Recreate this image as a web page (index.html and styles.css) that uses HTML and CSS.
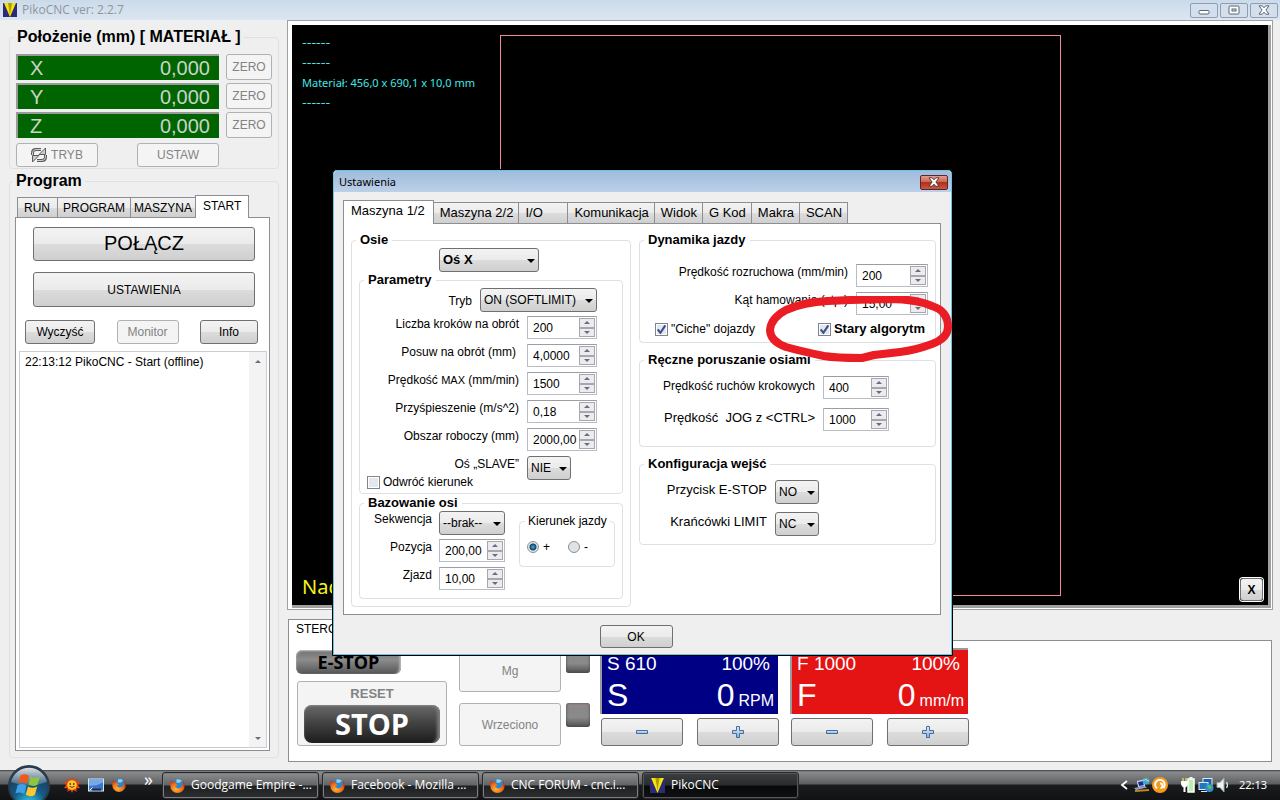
FILE: index.html
```html
<!DOCTYPE html>
<html lang="pl">
<head>
<meta charset="utf-8">
<title>PikoCNC ver: 2.2.7</title>
<link rel="stylesheet" href="styles.css">
</head>
<body>
<svg width="0" height="0" class="defs" aria-hidden="true">
  <defs>
    <linearGradient id="gPlus" x1="0" y1="0" x2="0" y2="1"><stop offset="0" stop-color="#e4f0fb"/><stop offset="1" stop-color="#7fb0dc"/></linearGradient>
    <radialGradient id="gFox" cx=".4" cy=".7" r=".7"><stop offset="0" stop-color="#ffb52e"/><stop offset=".6" stop-color="#ee6a1c"/><stop offset="1" stop-color="#b8320f"/></radialGradient>
    <radialGradient id="gOrb" cx=".5" cy=".95" r=".9"><stop offset="0" stop-color="#35d0ee"/><stop offset=".45" stop-color="#155a86"/><stop offset="1" stop-color="#1a3550"/></radialGradient>
    <linearGradient id="gShine" x1="0" y1="0" x2="0" y2="1"><stop offset="0" stop-color="#fff" stop-opacity=".85"/><stop offset="1" stop-color="#fff" stop-opacity=".15"/></linearGradient>
  </defs>
  <symbol id="logo" viewBox="0 0 14 14"><rect width="14" height="14" fill="#2c2a78"/><path d="M1 0h12L7 14z" fill="#f4e60c"/><path d="M5 0h4L7 12z" fill="#b39b08"/></symbol>
  <symbol id="plus" viewBox="0 0 12 12"><path d="M4.500.5h3v4h4v3h-4v4h-3v-4h-4v-3h4z" fill="url(#gPlus)" stroke="#456c9c"/></symbol>
  <symbol id="minus" viewBox="0 0 12 12"><path d="M.5 4.500h11v3H.5z" fill="url(#gPlus)" stroke="#456c9c"/></symbol>
  <symbol id="fox" viewBox="0 0 14 14"><circle cx="7.500" cy="6.500" r="5.500" fill="#2b86cf"/><path d="M6 1.500q3-1.200 5 1l-2 2-3 0z" fill="#8fd0f2"/><path d="M1.500 2Q0 4 .3 7.500A6.700 6.500 0 0 0 13.700 7.500Q14 4.500 12 2.500Q12.500 5 11.500 7Q10 10 7 9.500Q5 9 4.800 7.500L7 7Q7 5.800 5.500 5.500L5.600 4Q4 3 3 3.700Q2 3 1.500 2z" fill="url(#gFox)"/></symbol>
  <symbol id="tick" viewBox="0 0 10 10"><path d="M1.500 4.800L4 8l4.500-6.800" fill="none" stroke="#3b4f8e" stroke-width="1.900"/></symbol>
</svg>

<header class="titlebar">
  <svg class="logo"><use href="#logo"/></svg>
  <h1>PikoCNC ver: 2.2.7</h1>
  <div class="winbtns">
    <button type="button" aria-label="Minimalizuj"><svg viewBox="0 0 12 10"><rect x="1" y="5.500" width="10" height="3.500" rx="1" fill="#fff" stroke="#5c6675"/></svg></button>
    <button type="button" aria-label="Maksymalizuj"><svg viewBox="0 0 12 10"><rect x="1" y="1" width="10" height="8" rx="1" fill="#fff" stroke="#5c6675"/><rect x="4" y="4" width="4" height="2" fill="#d5e1ee" stroke="#5c6675"/></svg></button>
    <button type="button" aria-label="Zamknij"><svg viewBox="0 0 12 10"><path d="M1 .8h3.200L6 2.800 7.800.8H11L7.900 5 11 9.200H7.800L6 7.200 4.200 9.200H1L4.100 5z" fill="#fff" stroke="#5c6675"/></svg></button>
  </div>
</header>

<main class="workspace">
  <aside class="sidebar">
    <fieldset class="group position">
      <legend>Położenie (mm) [ MATERIAŁ ]</legend>
      <div class="axis"><div class="readout"><span>X</span><output>0,000</output></div><button type="button" class="btn" disabled>ZERO</button></div>
      <div class="axis"><div class="readout"><span>Y</span><output>0,000</output></div><button type="button" class="btn" disabled>ZERO</button></div>
      <div class="axis"><div class="readout"><span>Z</span><output>0,000</output></div><button type="button" class="btn" disabled>ZERO</button></div>
      <div class="modes">
        <button type="button" class="btn" disabled><svg viewBox="0 0 16 16" class="cycle"><path d="M1.500 8V6q0-3.500 3.500-3.500h5M14.500 8v2q0 3.500-3.500 3.500H6" fill="none" stroke="#5c5c5c" stroke-width="3"/><path d="M1.500 8V6q0-3.500 3.500-3.500h5M14.500 8v2q0 3.500-3.500 3.500H6" fill="none" stroke="#ccc"/><path d="M14.500 1v6.500H8zM1.500 15V8.500H8z" fill="#ccc" stroke="#5c5c5c"/></svg>TRYB</button>
        <button type="button" class="btn" disabled>USTAW</button>
      </div>
    </fieldset>

    <fieldset class="group program">
      <legend>Program</legend>
      <div class="tabs" role="tablist">
        <button type="button" role="tab" class="run">RUN</button><button type="button" role="tab">PROGRAM</button><button type="button" role="tab" class="tight">MASZYNA</button><button type="button" role="tab" aria-selected="true">START</button>
      </div>
      <div class="startpage">
        <button type="button" class="btn connect">POŁĄCZ</button>
        <button type="button" class="btn settings">USTAWIENIA</button>
        <div class="trio">
          <button type="button" class="btn">Wyczyść</button>
          <button type="button" class="btn" disabled>Monitor</button>
          <button type="button" class="btn">Info</button>
        </div>
        <div class="log">
          <textarea readonly aria-label="Dziennik">22:13:12 PikoCNC - Start (offline)</textarea>
          <div class="scroll"><button type="button" class="up" aria-label="W górę"></button><button type="button" class="down" aria-label="W dół"></button></div>
        </div>
      </div>
    </fieldset>
  </aside>

  <section class="stage">
    <div class="viewport">
      <div class="canvas">
        <p class="dash">------</p><p class="dash">------</p><p>Materiał: 456,0 x 690,1 x 10,0 mm</p><p class="dash">------</p>
        <div class="sheet"></div>
        <p class="hint">Nac</p>
        <button type="button" class="btn hide">X</button>
      </div>
    </div>

    <div class="controls">
      <div class="ctab">STEROWANIE</div>
      <div class="deck">
        <div class="stops">
          <button type="button" class="estop">E-STOP</button>
          <button type="button" class="reset" disabled>RESET<span class="stop">STOP</span></button>
        </div>
        <div class="tools">
          <button type="button" class="btn" disabled>Mg</button><i class="lamp"></i>
          <button type="button" class="btn" disabled>Wrzeciono</button><i class="lamp"></i>
        </div>
        <div class="feed">
          <div class="meter blue"><div><span>S 610</span><span>100%</span></div><div class="big"><span>S</span><span class="value">0<small>RPM</small></span></div></div>
          <div class="pair"><button type="button" class="btn" aria-label="S mniej"><svg><use href="#minus"/></svg></button><button type="button" class="btn" aria-label="S więcej"><svg><use href="#plus"/></svg></button></div>
        </div>
        <div class="feed">
          <div class="meter red"><div><span>F 1000</span><span>100%</span></div><div class="big"><span>F</span><span class="value">0<small>mm/m</small></span></div></div>
          <div class="pair"><button type="button" class="btn" aria-label="F mniej"><svg><use href="#minus"/></svg></button><button type="button" class="btn" aria-label="F więcej"><svg><use href="#plus"/></svg></button></div>
        </div>
      </div>
    </div>
  </section>
</main>

<section class="dialog" role="dialog" aria-labelledby="dlgTitle">
  <header><h2 id="dlgTitle">Ustawienia</h2><button type="button" class="close" aria-label="Zamknij"><svg viewBox="0 0 12 10"><path d="M1 .8h3.200L6 2.800 7.800.8H11L7.900 5 11 9.200H7.800L6 7.200 4.200 9.200H1L4.100 5z" fill="#fff" stroke="#5b3a3a"/></svg></button></header>
  <div class="body">
    <div class="tabs" role="tablist">
      <button type="button" role="tab" aria-selected="true">Maszyna 1/2</button><button type="button" role="tab">Maszyna 2/2</button><button type="button" role="tab" class="io">I/O</button><button type="button" role="tab">Komunikacja</button><button type="button" role="tab">Widok</button><button type="button" role="tab">G Kod</button><button type="button" role="tab">Makra</button><button type="button" role="tab">SCAN</button>
    </div>
    <div class="page">
      <fieldset class="box axes">
        <legend>Osie</legend>
        <div class="drop axis-pick"><select aria-label="Oś"><option>Oś X</option></select></div>
        <fieldset class="box params">
          <legend>Parametry</legend>
          <div class="row"><label for="tryb" class="low">Tryb</label><div class="drop wide"><select id="tryb"><option>ON (SOFTLIMIT)</option></select></div></div>
          <div class="row"><label for="kroki">Liczba kroków na obrót</label><div class="spin"><input id="kroki" value="200"><button type="button" class="up" aria-label="Więcej"></button><button type="button" class="down" aria-label="Mniej"></button></div></div>
          <div class="row"><label for="posuw" class="inset">Posuw na obrót (mm)</label><div class="spin"><input id="posuw" value="4,0000"><button type="button" class="up" aria-label="Więcej"></button><button type="button" class="down" aria-label="Mniej"></button></div></div>
          <div class="row"><label for="vmax">Prędkość <small>MAX</small> (mm/min)</label><div class="spin"><input id="vmax" value="1500"><button type="button" class="up" aria-label="Więcej"></button><button type="button" class="down" aria-label="Mniej"></button></div></div>
          <div class="row"><label for="acc">Przyśpieszenie (m/s^2)</label><div class="spin"><input id="acc" value="0,18"><button type="button" class="up" aria-label="Więcej"></button><button type="button" class="down" aria-label="Mniej"></button></div></div>
          <div class="row"><label for="obszar">Obszar roboczy (mm)</label><div class="spin"><input id="obszar" value="2000,00"><button type="button" class="up" aria-label="Więcej"></button><button type="button" class="down" aria-label="Mniej"></button></div></div>
          <div class="row"><label for="slave">Oś „SLAVE”</label><div class="slot"><div class="drop"><select id="slave"><option>NIE</option></select></div></div></div>
          <label class="check flip"><input type="checkbox"><svg><use href="#tick"/></svg>Odwróć kierunek</label>
        </fieldset>
        <fieldset class="box homing">
          <legend>Bazowanie osi</legend>
          <div class="seq">
            <div class="row"><label for="sekw">Sekwencja</label><div class="drop"><select id="sekw"><option>--brak--</option></select></div></div>
            <div class="row"><label for="poz">Pozycja</label><div class="spin"><input id="poz" value="200,00"><button type="button" class="up" aria-label="Więcej"></button><button type="button" class="down" aria-label="Mniej"></button></div></div>
            <div class="row"><label for="zjazd">Zjazd</label><div class="spin"><input id="zjazd" value="10,00"><button type="button" class="up" aria-label="Więcej"></button><button type="button" class="down" aria-label="Mniej"></button></div></div>
          </div>
          <fieldset class="box dir">
            <legend>Kierunek jazdy</legend>
            <label><input type="radio" name="dir" checked>+</label>
            <label><input type="radio" name="dir">-</label>
          </fieldset>
        </fieldset>
      </fieldset>

      <div class="right">
        <fieldset class="box dynamics">
          <legend>Dynamika jazdy</legend>
          <div class="row"><label for="roz">Prędkość rozruchowa (mm/min)</label><div class="spin"><input id="roz" value="200"><button type="button" class="up" aria-label="Więcej"></button><button type="button" class="down" aria-label="Mniej"></button></div></div>
          <div class="row"><label for="kat">Kąt hamowania (stp.)</label><div class="spin"><input id="kat" value="15,00"><button type="button" class="up" aria-label="Więcej"></button><button type="button" class="down" aria-label="Mniej"></button></div></div>
          <div class="checks">
            <label class="check"><input type="checkbox" checked><svg><use href="#tick"/></svg>"Ciche" dojazdy</label>
            <label class="check strong"><input type="checkbox" checked><svg><use href="#tick"/></svg>Stary algorytm</label>
          </div>
        </fieldset>
        <fieldset class="box manual">
          <legend>Ręczne poruszanie osiami</legend>
          <div class="row"><label for="krok">Prędkość ruchów krokowych</label><div class="spin"><input id="krok" value="400"><button type="button" class="up" aria-label="Więcej"></button><button type="button" class="down" aria-label="Mniej"></button></div></div>
          <div class="row larger"><label for="jog">Prędkość&nbsp; JOG z &lt;CTRL&gt;</label><div class="spin"><input id="jog" value="1000"><button type="button" class="up" aria-label="Więcej"></button><button type="button" class="down" aria-label="Mniej"></button></div></div>
        </fieldset>
        <fieldset class="box inputs">
          <legend>Konfiguracja wejść</legend>
          <div class="row larger"><label for="es">Przycisk E-STOP</label><div class="drop"><select id="es"><option>NO</option></select></div></div>
          <div class="row larger"><label for="lim">Krańcówki LIMIT</label><div class="drop"><select id="lim"><option>NC</option></select></div></div>
        </fieldset>
      </div>
    </div>
    <button type="button" class="btn ok">OK</button>
  </div>
  <svg class="marker" viewBox="0 0 190 72" aria-hidden="true"><path d="M4 34Q5 22 20 14Q38 6 62 5L84 4L124 3Q150 3 166 10Q182 15 182 31Q182 42 166 48Q150 54 134 56L108 59L96 62Q70 62 58 60Q34 55 20 51Q4 45 4 34z" fill="none" stroke="#ea1c24" stroke-width="8" stroke-linejoin="round"/></svg>
</section>

<footer class="taskbar">
  <button type="button" class="orb" aria-label="Start"><svg viewBox="0 0 42 42"><circle cx="21" cy="21" r="20" fill="url(#gOrb)" stroke="#2b3c4a" stroke-width="2"/><path d="M3 17A18.500 18.500 0 0 1 39 17Q21 24 3 17z" fill="url(#gShine)"/><path d="M12.500 10.500q4-2.500 8.500.3L19 19q-4-3-9-.7z" fill="#ee5a1d"/><path d="M22.500 11.500q4.500 2.500 9.500 0l-2.500 8.200q-4.500 2.500-9-.2z" fill="#8cc63e"/><path d="M9.600 20q4.800-2.300 8.900.5L16.300 29q-4-2.800-8.800-.6z" fill="#3ea0e6"/><path d="M20 21.500q4.500 2.400 9.200 0L26.800 30q-4.600 2.500-9-.3z" fill="#fdc82f"/></svg></button>
  <nav class="quick">
    <a href="#" aria-label="Pogoda"><svg viewBox="0 0 16 16"><path d="M8 0l1.500 3L12.500 1l0 3.500L16 5l-2 3 2 3-3.500.5V15l-3-2L8 16l-1.500-3-3 2v-3.500L0 11l2-3-2-3 3.500-.5V1l3 2z" fill="#e0401c"/><circle cx="8" cy="8" r="4.800" fill="#ffc928"/><circle cx="6.300" cy="7" r=".8"/><circle cx="9.700" cy="7" r=".8"/><path d="M5.500 9.300q2.500 2.200 5 0" fill="none" stroke="#722"/></svg></a>
    <a href="#" aria-label="Pulpit"><svg viewBox="0 0 16 13"><rect x=".5" y=".5" width="15" height="12" fill="#3b74cc" stroke="#dce6ef"/><path d="M1 1h14v3Q8 8 1 7z" fill="#78a8e6"/><path d="M4 11h9" stroke="#1c2f4d" stroke-width="2"/><path d="M1.500 12l3-3" stroke="#fff"/></svg></a>
    <a href="#" aria-label="Firefox"><svg viewBox="0 0 14 14"><use href="#fox"/></svg></a>
  </nav>
  <span class="more">»</span>
  <nav class="tasks">
    <a href="#"><svg viewBox="0 0 14 14"><use href="#fox"/></svg>Goodgame Empire -...</a>
    <a href="#"><svg viewBox="0 0 14 14"><use href="#fox"/></svg>Facebook - Mozilla ...</a>
    <a href="#"><svg viewBox="0 0 14 14"><use href="#fox"/></svg>CNC FORUM - cnc.i...</a>
    <a href="#" class="active"><svg viewBox="0 0 14 14"><use href="#logo"/></svg>PikoCNC</a>
  </nav>
  <div class="tray">
    <svg viewBox="0 0 8 10" class="t8"><path d="M7 1L2 5l5 4" fill="none" stroke="#fff" stroke-width="1.800"/></svg>
    <svg viewBox="0 0 16 16" class="t16"><path d="M1 13l14-1v2L1 15z" fill="#c8841c"/><path d="M3 4l7-1.500L11 9l-7 1z" fill="#dfe6f4"/><path d="M4 5l5-1 .8 4.200L5 9z" fill="#1a2a9c"/><path d="M0 11l11-2 2 1.500L2 13z" fill="#8ea4d0"/><circle cx="12" cy="4" r="3.500" fill="#4aa3c8"/><path d="M9 3q2 1 3-1 1 3 3 2" stroke="#bfe7a8" fill="none"/></svg>
    <svg viewBox="0 0 16 16" class="t16"><circle cx="8" cy="8" r="8" fill="#f59a1b"/><path d="M5 11.500A4.800 4.800 0 1 1 11.300 11" fill="none" stroke="#fff" stroke-width="1.900"/><path d="M8 6.500q2.500 0 2.500 2.200T8.500 11" fill="none" stroke="#fff" stroke-width="1.900"/></svg>
    <svg viewBox="0 0 16 16" class="t16 gapl"><rect x="8" y="2" width="6" height="13" fill="#b9f0ae" stroke="#fff" stroke-width="1.500"/><path d="M9.500 0.500h3" stroke="#fff" stroke-width="2"/><path d="M3 1v3M6 1v3" stroke="#e8d24a" stroke-width="1.500"/><path d="M1 4h7v3q-.5 3-2.500 3.500V15h-2v-4.500Q1.500 10 1 7z" fill="#fff"/></svg>
    <svg viewBox="0 0 16 16" class="t16"><rect x="5" y="1.500" width="9" height="7" fill="#1d5fa8" stroke="#dcecf8"/><rect x="1" y="5.500" width="9" height="7" fill="#1f78c4" stroke="#dcecf8"/><path d="M3 14.500h6" stroke="#dcecf8"/><circle cx="11.500" cy="11" r="4" fill="#2e8fd6"/><path d="M9 9q2-2 4 0t-1 3q-2 0-3-3z" fill="#5fc04a"/></svg>
    <svg viewBox="0 0 16 16" class="t16"><path d="M1 5.500h3L8 1v14l-4-4.500H1z" fill="#eef2f4" stroke="#9aa"/><path d="M10.500 5q2 3 0 6" fill="none" stroke="#e6e6e6" stroke-width="1.300"/></svg>
    <time>22:13</time>
  </div>
</footer>
</body>
</html>
```
FILE: styles.css
```css
* { box-sizing: border-box; }
body {
  margin: 0;
  height: 100vh;
  display: grid;
  grid-template-rows: 20px minmax(0, 1fr) 30px;
  overflow: hidden;
  position: relative;
  background: #efefef;
  color: #000;
  font: 12px/16px "Liberation Sans", Arial, sans-serif;
}
button, input, select, textarea { font: inherit; color: inherit; margin: 0; padding: 0; }
h1, h2, p { margin: 0; font-weight: normal; }
fieldset { margin: 0; min-width: 0; border: 1px solid #dde1e4; border-radius: 4px; }
.defs { position: absolute; }

/* window frame */
.titlebar {
  display: flex;
  align-items: center;
  padding: 0 3px;
  background: linear-gradient(#cbdaea, #dbe6f1);
}
.titlebar h1 { font: 12px/18px "Open Sans", "Noto Sans", sans-serif; color: #8d959c; margin-left: 5px; flex: 1; }
.logo { width: 14px; height: 14px; }
.winbtns { display: flex; gap: 2px; margin-right: -1px; }
.winbtns button {
  width: 28px; height: 15px;
  border: 1px solid #8d9db2; border-radius: 2px;
  background: #d3dfec;
  display: grid; place-items: center;
}
.winbtns svg, .close svg { width: 12px; height: 10px; }

.workspace { display: flex; gap: 8px; padding: 0 7px 8px 9px; }
.sidebar { width: 270px; display: flex; flex-direction: column; gap: 2px; padding: 7px 0 4px; flex: none; }
.stage { flex: 1; min-width: 0; display: flex; flex-direction: column; gap: 9px; }

.btn {
  border: 1px solid #707070; border-radius: 3px;
  background: linear-gradient(#f3f3f3, #ebebeb 50%, #dcdcdc 51%, #cfcfcf);
  display: inline-flex; align-items: center; justify-content: center;
}
.btn:disabled { border-color: #adb2b5; background: #f4f4f4; color: #838383; }

/* position */
.group legend { font: bold 16px/20px "Liberation Sans", Arial, sans-serif; padding: 0 3px; margin-left: -2px; }
.position { padding: 7px 6px 1px; display: flex; flex-direction: column; gap: 3px; }
.axis { display: grid; grid-template-columns: 1fr 46px; gap: 7px; height: 26px; }
.readout {
  display: flex; justify-content: space-between; align-items: center;
  padding: 0 9px 0 12px;
  background: #006400; color: #c8d4c8;
  border: solid #9a9a9a; border-width: 2px 0 0 2px;
  font-size: 20px;
}
.modes { display: flex; gap: 39px; height: 24px; margin-top: 2px; }
.modes .btn { width: 82px; gap: 4px; }
.cycle { width: 16px; height: 16px; }

/* tabs */
.tabs { display: flex; align-items: flex-end; }
.tabs button {
  border: 1px solid #8c8e94; border-bottom: 0; margin-left: -1px;
  background: linear-gradient(#f2f2f2, #ebebeb 50%, #dcdcdc 51%, #cfcfcf);
  height: 20px; padding: 0 5px;
}
.tabs button[aria-selected="true"] { background: #fff; height: 23px; margin-bottom: -1px; padding: 0 7px 2px; position: relative; }
.program { flex: 1; display: flex; flex-direction: column; padding: 4px 8px 6px 5px; }
.program .tabs { padding-left: 3px; }
.program .tabs .run { padding: 0 7px 0 6px; }
.program .tabs .tight { padding: 0 3px; }
.startpage {
  flex: 1; display: flex; flex-direction: column; min-height: 0;
  background: #fff; border: 1px solid #8c8e94; padding: 9px 2px 2px 3px;
}
.connect { height: 34px; margin: 0 12px 11px 14px; padding-bottom: 2px; font-size: 20px; }
.settings { height: 35px; margin: 0 12px 13px 14px; }
.trio { display: flex; justify-content: space-between; height: 24px; margin: 0 9px 7px 6px; }
.trio .btn { width: 70px; }
.trio .btn:nth-child(2) { width: 62px; }
.trio .btn:nth-child(3) { width: 58px; }
.log { flex: 1; display: flex; border: 1px solid #c9ccd0; }
.log textarea { flex: 1; min-width: 0; border: 0; resize: none; padding: 2px 5px; outline: 0; background: #fff; }
.scroll { width: 17px; background: #f3f3f3; display: flex; flex-direction: column; justify-content: space-between; }
.scroll button { border: 0; background: none; height: 18px; display: grid; place-items: center; }

.up::before, .down::before { content: ""; border: 3px solid transparent; }
.up::before { border-bottom: 3px solid #6c6c80; border-top: 0; }
.down::before { border-top: 3px solid #6c6c80; border-bottom: 0; }

/* machining view */
.viewport { flex: 1; display: flex; background: #fff; border: 1px solid #a0a0a0; padding: 4px 1px 1px 4px; }
.canvas {
  flex: 1; position: relative; background: #000; color: #40e8e8;
  border: solid #a0a0a0; border-width: 0 3px 3px 0;
  padding: 8px 10px; font: 11px/20px "Noto Sans", "Open Sans", sans-serif;
}
.dash { font-family: "DejaVu Sans", sans-serif; font-size: 13px; }
.sheet { position: absolute; left: 208px; right: 207px; top: 10px; bottom: 9px; border: 1px solid #f08a9c; }
.hint { position: absolute; left: 10px; bottom: 4px; color: #f4f41c; font-size: 20px; line-height: 28px; }
.hide { position: absolute; right: 5px; bottom: 4px; width: 23px; height: 23px; font: bold 12px "Liberation Sans", sans-serif; color: #000; box-shadow: 0 0 0 1px #fff; }

/* manual control */
.controls { margin: 0 1px 0 1px; }
.ctab {
  width: 90px; height: 22px; padding: 1px 7px; margin-bottom: -1px;
  background: #fff; border: 1px solid #8c8e94; border-bottom: 0; position: relative;
}
.deck { display: flex; align-items: flex-end; background: #fff; border: 1px solid #8c8e94; height: 122px; padding: 7px 8px 15px; }
.stops { display: flex; flex-direction: column; align-items: flex-start; gap: 7px; width: 150px; }
.estop {
  width: 105px; height: 24px; border: 0; border-radius: 6px; margin-left: -1px;
  font: bold 18px/24px "Open Sans", sans-serif;
  background: linear-gradient(#707070, #8d8d8d 40%, #555); box-shadow: inset 0 1px 2px #ccc, inset -3px 0 2px -1px #aaa;
}
.reset {
  width: 150px; height: 65px; border: 1px solid #adb2b5; border-radius: 3px; background: #f4f4f4;
  font: bold 13px/16px "Liberation Sans", sans-serif; color: #838383;
  display: flex; flex-direction: column; align-items: center; justify-content: flex-end; gap: 3px; padding-bottom: 2px;
}
.stop {
  width: 136px; height: 38px; border-radius: 8px; color: #fff;
  font: bold 29px/37px "Open Sans", sans-serif;
  background: linear-gradient(#6a6a6a, #444 45%, #1c1c1c); box-shadow: inset 0 1px 2px #888, inset -6px 0 3px -3px #777;
}
.tools { display: grid; grid-template-columns: 102px 24px; gap: 11px 5px; margin-left: 12px; }
.tools .btn { height: 43px; }
.lamp { width: 24px; height: 24px; border-radius: 3px; background: linear-gradient(#a08c8c, #888 20%, #8a8a8a 60%, #505050); box-shadow: inset 0 0 3px #444; }
.feed { width: 178px; margin-left: 10px; }
.feed + .feed { margin-left: 12px; }
.meter {
  color: #fff; height: 66px; padding: 1px 4px 0 5px; font-size: 19px; line-height: 26px;
  border: solid #9a9a9a; border-width: 2px 0 0 2px; 
}
.meter div { display: flex; justify-content: space-between; padding-right: 4px; }
.meter .big { font-size: 32px; line-height: 36px; padding-right: 0; }
.meter .value { display: flex; align-items: baseline; gap: 4px; }
.meter small { font-size: 16px; }
.blue { background: #000084; }
.red { background: #e41414; }
.pair { display: flex; gap: 14px; margin: 4px -1px 0 1px; }
.pair .btn { flex: 1; height: 28px; }
.pair svg { width: 12px; height: 12px; }

/* settings dialog */
.dialog {
  position: absolute; left: 332px; top: 169px; width: 621px;
  border: 1px solid #000; border-radius: 5px 5px 0 0;
  background: #efefef;
  box-shadow: inset 0 0 0 1px #6cc4e4;
}
.dialog > header {
  display: flex; align-items: center; justify-content: space-between;
  height: 21px; padding: 1px 3px 0 5px; margin: 1px;
  border-radius: 4px 4px 0 0;
  background: linear-gradient(#a0bbdb, #bcd0e8);
}
.dialog h2 { font: 11px/18px "Noto Sans", "Open Sans", sans-serif; }
.close {
  width: 28px; height: 15px; border: 1px solid #5a2430; border-radius: 2px;
  background: linear-gradient(#e0a090, #cf6450 45%, #b03018 50%, #c85840);
  display: grid; place-items: center;
}
.body { padding: 7px 11px 7px 10px; display: flex; flex-direction: column; }
.dialog .tabs button { font-size: 13px; height: 21px; padding: 0 5px 0 6px; }
.dialog .tabs button[aria-selected="true"] { height: 24px; padding: 0 8px 3px 7px; margin-left: 0; }
.dialog .tabs .io { width: 50px; text-align: left; }
.page { display: flex; gap: 8px; background: #fff; border: 1px solid #8c8e94; padding: 8px 4px 7px 7px; }
.box { padding: 0 7px 7px; }
.box > legend { font: bold 13px/16px "Liberation Sans", Arial, sans-serif; padding: 0 4px; margin-left: -3px; }
.axes { width: 280px; }
.axis-pick { margin-left: 80px; font-weight: bold; font-size: 13px; }
.right { flex: 1; min-width: 0; }

.row { display: flex; justify-content: flex-end; gap: 8px; height: 28px; text-align: right; }
.row small { font-size: 11px; }
.row .low { padding-top: 5px; }
.row .inset { padding-right: 3px; }
.larger { font-size: 13px; }
.drop { position: relative; height: 24px; width: 44px; text-align: left; }
.drop::after {
  content: ""; position: absolute; right: 4px; top: 11px; pointer-events: none;
  border: 4px solid transparent; border-top-color: #000; border-bottom: 0;
}
.drop select {
  appearance: none; width: 100%; height: 24px; padding: 0 3px; outline: 0;
  border: 1px solid #707070; border-radius: 3px;
  background: linear-gradient(#f3f3f3, #ebebeb 50%, #dcdcdc 51%, #cfcfcf);
}
.drop.axis-pick { width: 100px; }
.drop.wide { width: 117px; }
.slot { width: 70px; }

.spin {
  display: grid; grid-template: 1fr 1fr / 1fr 16px; column-gap: 1px;
  width: 70px; height: 23px; border: 1px solid #b8bcc4; border-top-color: #9a9da4; padding: 1px; background: #fff;
  font-size: 12px;
}
.spin input { grid-row: 1 / 3; border: 0; min-width: 0; width: 100%; padding-left: 4px; outline: 0; background: none; }
.spin button { border: 1px solid #a8a8ac; background: #ececf0; display: grid; place-items: center; }

.params { padding: 0 25px 3px 7px; }
.check { display: flex; align-items: center; gap: 3px; position: relative; }
.check input {
  appearance: none; width: 13px; height: 13px; border: 1px solid #7c8590;
  background: #e4e8ec; box-shadow: inset 0 0 0 1px #fff;
}
.check svg { position: absolute; left: 1px; width: 11px; height: 11px; visibility: hidden; }
.check input:checked + svg { visibility: visible; }
.flip { margin-top: -10px; width: 120px; }

.homing { display: flex; gap: 14px; padding: 0 7px 3px; margin-top: 1px; }
.seq { width: 138px; }
.seq .row { gap: 7px; }
.seq .drop, .seq .spin { width: 66px; }
.dir { flex: 1; height: 54px; margin-top: 2px; padding: 10px 0 0 7px; display: flex; gap: 18px; }
.dir > legend { font-weight: normal; font-size: 12px; white-space: nowrap; padding: 0 3px; margin-left: -2px; }
.dir label { display: flex; align-items: center; gap: 4px; height: 16px; }
.dir input {
  appearance: none; width: 12px; height: 12px; border: 1px solid #8a8f94; border-radius: 50%;
  background: #e0e3e6;
}
.dir input:checked { background: radial-gradient(circle, #3c93b8 0 1px, #123e60 3px, #dde6ee 4px); }

.dynamics { padding: 16px 7px 5px; }
.dynamics .spin { width: 72px; }
.checks { display: flex; justify-content: space-between; padding: 1px 3px 0 8px; }
.strong { font-weight: bold; font-size: 13px; }
.dynamics, .manual { margin-bottom: 9px; }
.manual { padding: 8px 46px 6px 7px; }
.manual .row { height: 32px; }
.manual label { padding-top: 2px; }
.manual .spin { width: 66px; }
.inputs { padding: 8px 116px 0 7px; }
.inputs .row { height: 32px; }
.inputs label { padding-top: 2px; }
.inputs .drop { font-size: 12px; }
.ok { width: 73px; height: 23px; margin: 10px 12px 0 0; align-self: center; }
.marker { position: absolute; left: 433px; top: 126px; width: 190px; height: 72px; pointer-events: none; }

/* taskbar */
.taskbar {
  display: flex; align-items: center; position: relative;
  background: linear-gradient(#3c3f41, #8a8c8e 2px, #5c5e60 14px, #1a1c1e 15px, #101214);
  color: #fff; font: 12px/16px "Open Sans", "Noto Sans", sans-serif;
}
.taskbar a { color: inherit; text-decoration: none; }
.orb { width: 42px; height: 42px; margin: -5px 0 0 8px; border: 0; background: none; align-self: flex-start; }
.orb svg { width: 42px; height: 42px; }
.quick { display: flex; gap: 8px; margin-left: 14px; align-items: center; }
.quick a, .tasks a, .tray { display: flex; align-items: center; }
.quick svg { width: 16px; height: 16px; }
.quick a:last-child svg { width: 14px; }
.more { font-size: 18px; line-height: 14px; width: 10px; margin: -12px 8px 0 18px; }
.tasks { display: flex; gap: 3px; }
.tasks a {
  width: 157px; height: 27px; gap: 6px; padding: 0 7px; white-space: nowrap;
  border: 1px solid #26282a; border-radius: 3px; box-shadow: inset 0 0 0 1px #7c7e80;
  background: linear-gradient(#8c8e90, #626466 48%, #1e2022 52%, #2c2e30);
}
.tasks .active { background: linear-gradient(#3c3e40, #2a2c2e 48%, #08090a 52%, #101112); box-shadow: inset 0 0 0 1px #55585a; }
.tasks svg { width: 15px; height: 15px; flex: none; }
.tray { margin-left: auto; gap: 2px; padding-right: 13px; }
.t8 { width: 8px; height: 10px; margin-right: 4px; }
.t16 { width: 16px; height: 16px; }
.gapl { margin-left: 10px; }
.tray time { margin-left: 5px; font: 11px/16px "Noto Sans", sans-serif; }
```
